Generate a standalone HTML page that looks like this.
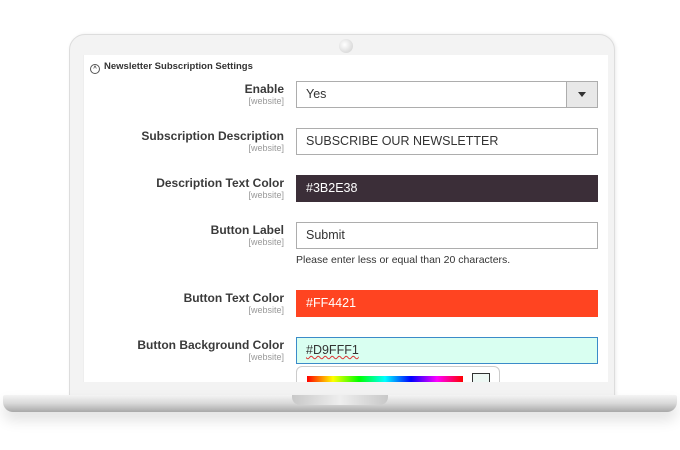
<!DOCTYPE html>
<html><head><style>
body{margin:0;width:680px;height:450px;background:#fff;position:relative;overflow:hidden;font-family:"Liberation Sans",sans-serif}
.lid{position:absolute;left:69px;top:34px;width:544px;height:370px;background:#f3f3f3;border:1px solid #ddd;border-radius:16px 16px 0 0;box-shadow:1px 0 3px rgba(0,0,0,.08)}
.cam{position:absolute;left:339px;top:39px;width:14px;height:14px;border-radius:50%;background:radial-gradient(circle at 40% 40%,#fff,#ccc)}
.screen{position:absolute;left:83px;top:55px;width:524px;height:327px;background:#fff;overflow:hidden;border-left:1px solid #eee}
.hdr{position:absolute;left:6px;top:6px;font-size:9.5px;color:#333;font-weight:bold}
.hdr span{display:inline-block;width:8px;height:8px;border:1px solid #555;border-radius:50%;vertical-align:-1px;margin-right:4px;font-size:6px;line-height:9px;text-align:center}
.lab{position:absolute;right:324px;text-align:right;font-size:12px;font-weight:bold;color:#3a3a3a;line-height:14px}
.lab small{display:block;font-size:9px;font-weight:normal;color:#999;line-height:11px}
.inp{position:absolute;left:212px;font-size:12.5px;line-height:25px;padding-left:9px;box-sizing:border-box;width:302px;height:27px;border:1px solid #adadad;color:#333}
.note{position:absolute;left:212px;top:199px;font-size:10.5px;color:#333}
.base{position:absolute;left:3px;top:395px;width:674px;height:17px;border-radius:2px 2px 10px 10px;background:linear-gradient(#f4f4f4,#d8d8d8 50%,#a9a9a9);box-shadow:0 8px 14px rgba(0,0,0,.12)}
.notch{position:absolute;left:292px;top:395px;width:96px;height:10px;border-radius:0 0 8px 8px;background:linear-gradient(90deg,#c8c8c8,#eee 50%,#c8c8c8)}
</style></head><body>
<div class="lid"></div>
<div class="cam"></div>
<div class="screen">
<div class="hdr"><span>^</span>Newsletter Subscription Settings</div>
<div class="lab" style="top:27px">Enable<small>[website]</small></div>
<div class="inp" style="top:26px">Yes<div style="position:absolute;right:0;top:0;width:30px;height:25px;background:#e8e8e8;border-left:1px solid #adadad"><div style="margin:10px auto;width:0;height:0;border-left:4px solid transparent;border-right:4px solid transparent;border-top:5px solid #333"></div></div></div>
<div class="lab" style="top:74px">Subscription Description<small>[website]</small></div>
<div class="inp" style="top:73px">SUBSCRIBE OUR NEWSLETTER</div>
<div class="lab" style="top:121px">Description Text Color<small>[website]</small></div>
<div class="inp" style="top:120px;background:#3b2e38;color:#fff;border-color:#3b2e38">#3B2E38</div>
<div class="lab" style="top:168px">Button Label<small>[website]</small></div>
<div class="inp" style="top:167px">Submit</div>
<div class="note">Please enter less or equal than 20 characters.</div>
<div class="lab" style="top:236px">Button Text Color<small>[website]</small></div>
<div class="inp" style="top:235px;background:#ff4421;color:#fff;border-color:#ff4421">#FF4421</div>
<div class="lab" style="top:283px">Button Background Color<small>[website]</small></div>
<div class="inp" style="top:282px;background:#d9fff1;border-color:#3b8bc9"><span style="text-decoration:underline wavy #d33;text-decoration-thickness:1px">#D9FFF1</span></div>
<div style="position:absolute;left:212px;top:311px;width:202px;height:30px;border:1px solid #ccc;border-radius:6px;background:#fff"></div>
<div style="position:absolute;left:223px;top:321px;width:156px;height:6px;background:linear-gradient(90deg,#f00,#ff0,#0f0,#0ff,#00f,#f0f,#f00)"></div>
<div style="position:absolute;left:388px;top:318px;width:16px;height:8px;border:1px solid #333;background:#eef8f4"></div>
</div>
<div class="base"></div>
<div class="notch"></div>
</body></html>
